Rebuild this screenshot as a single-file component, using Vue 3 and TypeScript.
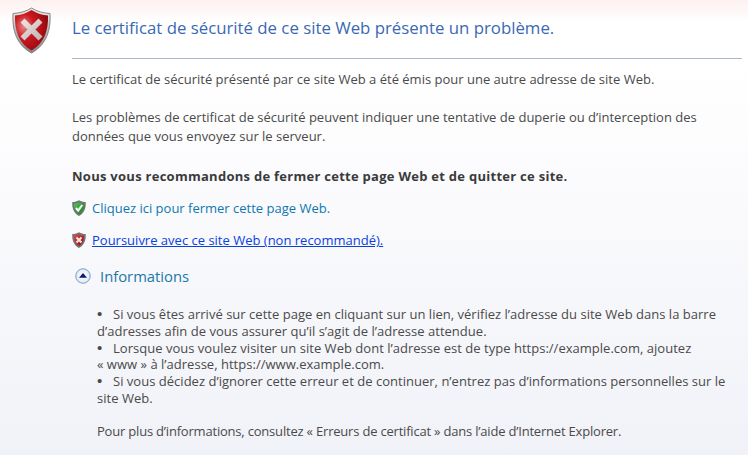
<template>
  <div class="page">
    <div class="header">
      <svg class="shield-big" viewBox="0 0 40 48" width="40" height="48">
        <defs>
          <radialGradient id="redBig" cx="0.28" cy="0.4" r="0.85">
            <stop offset="0" stop-color="#e88a8a" />
            <stop offset="0.35" stop-color="#cb1a20" />
            <stop offset="0.72" stop-color="#a40c12" />
            <stop offset="1" stop-color="#74060a" />
          </radialGradient>
          <linearGradient id="rimBig" x1="0" y1="0" x2="0" y2="1">
            <stop offset="0" stop-color="#ececec" />
            <stop offset="1" stop-color="#858585" />
          </linearGradient>
          <linearGradient id="xBig" x1="0" y1="0" x2="1" y2="1">
            <stop offset="0" stop-color="#ecdede" />
            <stop offset="1" stop-color="#c4bcbc" />
          </linearGradient>
          <linearGradient id="greenSmall" x1="0" y1="0" x2="1" y2="1">
            <stop offset="0" stop-color="#5cc45c" />
            <stop offset="1" stop-color="#0f7f1c" />
          </linearGradient>
          <linearGradient id="redSmall" x1="0" y1="0" x2="1" y2="1">
            <stop offset="0" stop-color="#dc4a4e" />
            <stop offset="1" stop-color="#920b12" />
          </linearGradient>
        </defs>
        <path d="M19.500 1 C25 4.500 31 6 38 6.500 C39 24 34 38 19.500 46 C5 38 0 24 1 6.500 C8 6 14 4.500 19.500 1Z" fill="url(#rimBig)" stroke="#6e6e6e" stroke-width="0.8" />
        <path d="M19.500 3 C25 6.500 30.500 8 36 8.500 C36.500 23 32.500 36 19.500 43.500 C6.500 36 2.500 23 3 8.500 C8.500 8 14 6.500 19.500 3Z" fill="url(#redBig)" />
        <path d="M12.500 15.500 L26.500 29.500 M26.500 15.500 L12.500 29.500" fill="none" stroke="url(#xBig)" stroke-width="5.600" stroke-linecap="square" />
      </svg>
      <h1 class="title">Le certificat de sécurité de ce site Web présente un problème.</h1>
    </div>

    <div class="content">
      <p class="para first">Le certificat de sécurité présenté par ce site Web a été émis pour une autre adresse de site Web.</p>
      <p class="para second">Les problèmes de certificat de sécurité peuvent indiquer une tentative de duperie ou d’interception des<br />données que vous envoyez sur le serveur.</p>
      <p class="para strong">Nous vous recommandons de fermer cette page Web et de quitter ce site.</p>

      <div class="action">
        <svg class="shield-small" viewBox="0 0 14 16" width="14" height="16">
          <path d="M7 .2 C9 1.400 11 2 13.700 2.100 C14.100 8 12.300 12.900 7 15.900 C1.700 12.900 -.1 8 .3 2.100 C3 2 5 1.400 7 .2Z" fill="#6f7572" />
          <path d="M7 2.200 C8.700 3.200 10.300 3.700 12 3.800 C12.200 8 10.800 11.800 7 14 C3.200 11.800 1.800 8 2 3.800 C3.700 3.700 5.300 3.200 7 2.200Z" fill="url(#greenSmall)" />
          <path d="M4 8 L6.200 10.600 L10.200 5" fill="none" stroke="#fff" stroke-width="2" />
        </svg>
        <a class="link-close" href="#">Cliquez ici pour fermer cette page Web.</a>
      </div>

      <div class="action">
        <svg class="shield-small" viewBox="0 0 14 16" width="14" height="16">
          <path d="M7 .2 C9 1.400 11 2 13.700 2.100 C14.100 8 12.300 12.900 7 15.900 C1.700 12.900 -.1 8 .3 2.100 C3 2 5 1.400 7 .2Z" fill="#767271" />
          <path d="M7 2.200 C8.700 3.200 10.300 3.700 12 3.800 C12.200 8 10.800 11.800 7 14 C3.200 11.800 1.800 8 2 3.800 C3.700 3.700 5.300 3.200 7 2.200Z" fill="url(#redSmall)" />
          <path d="M4.500 5.500 L9.500 10.500 M9.500 5.500 L4.500 10.500" fill="none" stroke="#efe6e6" stroke-width="2" />
        </svg>
        <a class="link-continue" href="#">Poursuivre avec ce site Web (non recommandé).</a>
      </div>

      <div class="info-head">
        <svg class="chevron" viewBox="0 0 16 16" width="16" height="16">
          <defs>
            <radialGradient id="disc" cx="0.5" cy="0.5" r="0.55">
              <stop offset="0" stop-color="#ffffff" />
              <stop offset="0.7" stop-color="#e8eef8" />
              <stop offset="1" stop-color="#a9c4e4" />
            </radialGradient>
          </defs>
          <circle cx="8" cy="8" r="7.300" fill="url(#disc)" stroke="#86a9d2" stroke-width="1" />
          <path d="M8 5 L12 9.800 H4Z" fill="#0a1a66" />
        </svg>
        <span class="info-title">Informations</span>
      </div>

      <div class="info-body">
        <p v-for="(item, i) in items" :key="i" class="bullet">
          <span class="dot">•</span><span v-html="item"></span>
        </p>
        <p class="more">Pour plus d’informations, consultez « Erreurs de certificat » dans l’aide d’Internet Explorer.</p>
      </div>
    </div>
  </div>
</template>

<script setup lang="ts">
const items: string[] = [
  'Si vous êtes arrivé sur cette page en cliquant sur un lien, vérifiez l’adresse du site Web dans la barre<br>d’adresses afin de vous assurer qu’il s’agit de l’adresse attendue.',
  'Lorsque vous voulez visiter un site Web dont l’adresse est de type https://example.com, ajoutez<br>« www » à l’adresse, https://www.example.com.',
  'Si vous décidez d’ignorer cette erreur et de continuer, n’entrez pas d’informations personnelles sur le<br>site Web.'
]
</script>

<style>
html, body {
  margin: 0;
  height: 100%;
}
</style>

<style scoped>
.page {
  width: 748px;
  height: 455px;
  overflow: hidden;
  box-sizing: border-box;
  background: linear-gradient(to bottom, #fdf0f0 0, #ffffff 22px, #ffffff 60px, #f1f2f8 100%);
  font-family: "Open Sans", "Noto Sans", sans-serif;
  font-size: 13px;
  color: #4a4a4a;
}

.header {
  display: flex;
  align-items: flex-start;
  padding: 7px 0 0 12px;
  height: 51px;
}

.shield-big {
  flex: none;
}

.title {
  margin: 10px 0 0 20px;
  font-size: 16.8px;
  font-weight: 400;
  line-height: 22px;
  color: #3b68b4;
}

.content {
  padding: 0 6px 0 72px;
}

.para {
  margin: 0;
  line-height: 19px;
}

.first {
  border-top: 1px solid #aeb8cc;
  padding-top: 11px;
}

.second {
  margin-top: 19px;
}

.strong {
  margin-top: 21px;
  letter-spacing: 0.27px;
  font-weight: 700;
  color: #3a3a3a;
}

.action {
  display: flex;
  align-items: center;
  gap: 6px;
  margin-top: 12px;
  height: 20px;
}

.link-close {
  color: #0f78b0;
  text-decoration: none;
}

.link-continue {
  color: #0a3fe0;
  text-decoration: underline;
}

.info-head {
  display: flex;
  align-items: center;
  gap: 9px;
  margin: 15px 0 0 3px;
  height: 22px;
}

.info-title {
  font-size: 14.8px;
  color: #1a78a8;
}

.info-body {
  margin-top: 19px;
  padding-left: 25px;
}

.bullet {
  margin: 0;
  line-height: 16.800px;
  letter-spacing: 0.02px;
}

.dot {
  display: inline-block;
  width: 16px;
  font-family: "Liberation Sans", sans-serif;
  font-size: 15px;
  line-height: 0;
}

.more {
  margin: 16px 0 0;
  line-height: 17px;
  letter-spacing: -0.2px;
}
</style>
